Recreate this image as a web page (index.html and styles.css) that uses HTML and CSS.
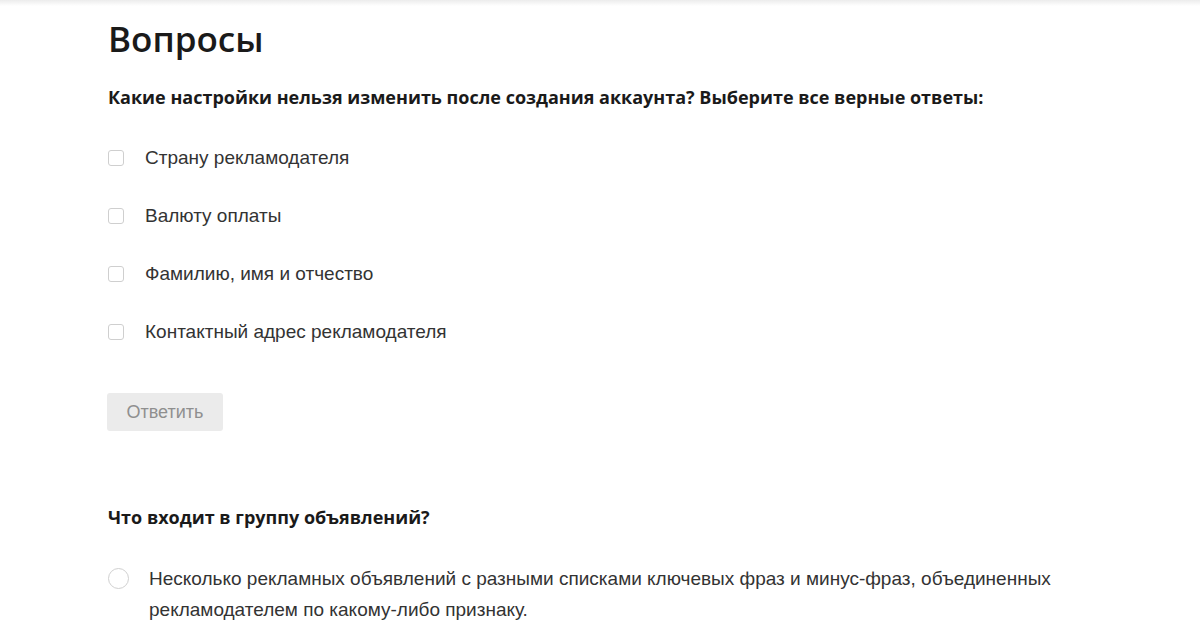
FILE: index.html
```html
<!DOCTYPE html>
<html>
<head>
  <meta charset="UTF-8" />
  <title>Вопросы</title>
  <link rel="stylesheet" href="styles.css">
</head>
<body>
  <div class="topshade"></div>
  <main class="page">
    <h1>Вопросы</h1>

    <form class="quiz">
      <h3>Какие настройки нельзя изменить после создания аккаунта? Выберите все верные ответы:</h3>
      <label class="opt"><span class="box"></span>Страну рекламодателя</label>
      <label class="opt"><span class="box"></span>Валюту оплаты</label>
      <label class="opt"><span class="box"></span>Фамилию, имя и отчество</label>
      <label class="opt"><span class="box"></span>Контактный адрес рекламодателя</label>
      <button type="button" class="answer">Ответить</button>
    </form>

    <form class="quiz second">
      <h3>Что входит в группу объявлений?</h3>
      <label class="opt radio"><span class="circle"></span><span>Несколько рекламных объявлений с разными списками ключевых фраз и минус-фраз, объединенных рекламодателем по какому-либо признаку.</span></label>
    </form>
  </main>
</body>
</html>
```

FILE: styles.css
```css
* {
  box-sizing: border-box;
}

body {
  margin: 0;
  background: #fff;
  color: #222;
  font-family: "Liberation Sans", Arial, sans-serif;
}

.topshade {
  height: 6px;
  background: linear-gradient(#ececec, #fff);
}

.page {
  width: 990px;
  margin-left: 108px;
}

h1 {
  margin: 11px 0 0;
  font-family: "Open Sans", sans-serif;
  font-weight: 600;
  font-size: 35px;
  line-height: 44px;
  color: #1a1a1a;
}

h3 {
  margin: 0;
  font-family: "Open Sans", sans-serif;
  font-weight: 700;
  font-size: 18px;
  line-height: 26px;
  color: #1a1a1a;
}

.quiz {
  display: flex;
  flex-direction: column;
  align-items: flex-start;
}

.quiz h3 { margin-top: 23px; margin-bottom: 19px }

.opt {
  display: flex;
  align-items: center;
  gap: 21px;
  height: 58px;
  font-size: 19px;
  color: #333;
  cursor: default;
}

.box {
  width: 16px;
  height: 16px;
  border: 1px solid #cfcfcf;
  border-radius: 3px;
  flex: none;
}

.answer {
  margin-top: 32px;
  margin-left: -1px;
  width: 116px;
  height: 38px;
  border: 0;
  border-radius: 3px;
  background: #ebebeb;
  color: #8f8f8f;
  font-family: "Liberation Sans", Arial, sans-serif;
  font-size: 18px;
}

.second h3 { margin-top: 73px; margin-bottom: 33px }

.opt.radio {
  height: auto;
  align-items: flex-start;
  gap: 20px;
  line-height: 31px;
}

.circle {
  width: 21px;
  height: 21px;
  margin-top: 5px;
  border: 1px solid #d0d0d0;
  border-radius: 50%;
  flex: none;
}
```
